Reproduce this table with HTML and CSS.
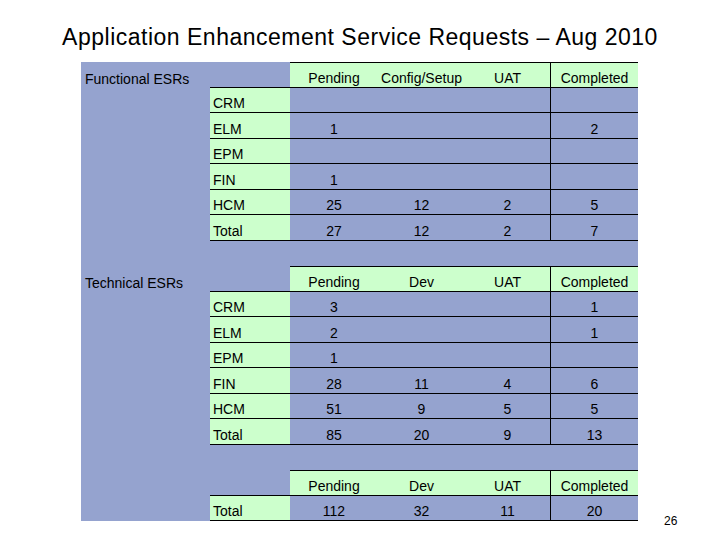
FILE: index.html
```html
<!DOCTYPE html>
<html>
<head>
<meta charset="utf-8">
<link rel="stylesheet" href="styles.css">
</head>
<body>
<div class="slide">
  <h1 class="title">Application Enhancement Service Requests – Aug 2010</h1>
  <div class="content">
    <div class="sheet">
      <!-- Functional header -->
      <div class="c lbl">Functional ESRs</div>
      <div class="c mod hb"></div>
      <div class="c hd ht hb">Pending</div>
      <div class="c hd ht hb">Config/Setup</div>
      <div class="c hd ht hb">UAT</div>
      <div class="c hd ht hb vl">Completed</div>

      <div class="c"></div><div class="c mod g hb">CRM</div><div class="c n hb"></div><div class="c n hb"></div><div class="c n hb"></div><div class="c n hb vl"></div>
      <div class="c"></div><div class="c mod g hb">ELM</div><div class="c n hb">1</div><div class="c n hb"></div><div class="c n hb"></div><div class="c n hb vl">2</div>
      <div class="c"></div><div class="c mod g hb">EPM</div><div class="c n hb"></div><div class="c n hb"></div><div class="c n hb"></div><div class="c n hb vl"></div>
      <div class="c"></div><div class="c mod g hb">FIN</div><div class="c n hb">1</div><div class="c n hb"></div><div class="c n hb"></div><div class="c n hb vl"></div>
      <div class="c"></div><div class="c mod g hb">HCM</div><div class="c n hb">25</div><div class="c n hb">12</div><div class="c n hb">2</div><div class="c n hb vl">5</div>
      <div class="c"></div><div class="c mod g hb">Total</div><div class="c n hb">27</div><div class="c n hb">12</div><div class="c n hb">2</div><div class="c n hb vl">7</div>

      <div class="c gap"></div>

      <!-- Technical header -->
      <div class="c lbl">Technical ESRs</div>
      <div class="c mod hb"></div>
      <div class="c hd ht hb">Pending</div>
      <div class="c hd ht hb">Dev</div>
      <div class="c hd ht hb">UAT</div>
      <div class="c hd ht hb vl">Completed</div>

      <div class="c"></div><div class="c mod g hb">CRM</div><div class="c n hb">3</div><div class="c n hb"></div><div class="c n hb"></div><div class="c n hb vl">1</div>
      <div class="c"></div><div class="c mod g hb">ELM</div><div class="c n hb">2</div><div class="c n hb"></div><div class="c n hb"></div><div class="c n hb vl">1</div>
      <div class="c"></div><div class="c mod g hb">EPM</div><div class="c n hb">1</div><div class="c n hb"></div><div class="c n hb"></div><div class="c n hb vl"></div>
      <div class="c"></div><div class="c mod g hb">FIN</div><div class="c n hb">28</div><div class="c n hb">11</div><div class="c n hb">4</div><div class="c n hb vl">6</div>
      <div class="c"></div><div class="c mod g hb">HCM</div><div class="c n hb">51</div><div class="c n hb">9</div><div class="c n hb">5</div><div class="c n hb vl">5</div>
      <div class="c"></div><div class="c mod g hb">Total</div><div class="c n hb">85</div><div class="c n hb">20</div><div class="c n hb">9</div><div class="c n hb vl">13</div>

      <div class="c gap"></div>

      <!-- Grand total header -->
      <div class="c"></div>
      <div class="c mod hb"></div>
      <div class="c hd ht hb">Pending</div>
      <div class="c hd ht hb">Dev</div>
      <div class="c hd ht hb">UAT</div>
      <div class="c hd ht hb vl">Completed</div>

      <div class="c"></div><div class="c mod g hb">Total</div><div class="c n hb">112</div><div class="c n hb">32</div><div class="c n hb">11</div><div class="c n hb vl">20</div>
    </div>
    <div class="pageno">26</div>
  </div>
</div>
</body>
</html>
```

FILE: styles.css
```css
html, body {
  margin: 0;
  padding: 0;
  background: #ffffff;
}

.slide {
  width: 720px;
  height: 540px;
  font-family: "Liberation Sans", Arial, sans-serif;
  color: #000000;
  overflow: hidden;
}

.title {
  margin: 0;
  padding-top: 25px;
  height: 38px;
  box-sizing: border-box;
  font-size: 23px;
  font-weight: normal;
  letter-spacing: 0.5px;
  line-height: 24px;
  text-align: center;
  white-space: nowrap;
}

.content {
  display: flex;
  align-items: flex-end;
  padding-left: 81px;
  margin-top: 24px;
}

.sheet {
  display: grid;
  grid-template-columns: 129px 80px 88px 87px 85px 88px;
  grid-auto-rows: 25.5px;
  background: #95a3cf;
  font-size: 14px;
  line-height: 16px;
}

.c {
  box-sizing: border-box;
  display: flex;
  align-items: flex-end;
  padding-bottom: 1px;
  white-space: nowrap;
}

.gap {
  grid-column: 1 / -1;
}

.lbl {
  padding-left: 4px;
}

.mod {
  padding-left: 3px;
}

.g {
  background: #ccffcc;
}

.hd {
  background: #ccffcc;
  justify-content: center;
}

.n {
  justify-content: center;
}

.ht {
  border-top: 1px solid #000000;
}

.hb {
  border-bottom: 1px solid #000000;
}

.vl {
  border-left: 1px solid #000000;
}

.pageno {
  font-size: 12px;
  line-height: 14px;
  margin-left: 26px;
  margin-bottom: -7px;
}
```
